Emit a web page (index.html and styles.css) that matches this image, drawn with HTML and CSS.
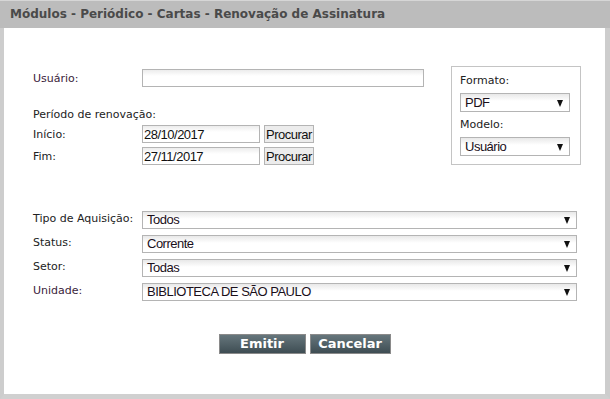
FILE: index.html
```html
<!doctype html>
<html>
<head>
    <title>Renovação de Assinatura</title>
    <meta charset="utf-8"/>
    <link rel="stylesheet" href="styles.css">
</head>
<body>
<div class="window">
    <div class="titlebar">Módulos - Periódico - Cartas - Renovação de Assinatura</div>

    <form class="content">
        <div class="top">
            <div class="fields">
                <div class="row">
                    <label class="req">Usuário:</label>
                    <input type="text" class="text user"/>
                </div>
                <div class="period">Período de renovação:</div>
                <div class="row">
                    <label>Início:</label>
                    <input type="text" class="text date" value="28/10/2017"/>
                    <button type="button" class="find">Procurar</button>
                </div>
                <div class="row gap">
                    <label>Fim:</label>
                    <input type="text" class="text date" value="27/11/2017"/>
                    <button type="button" class="find">Procurar</button>
                </div>
            </div>

            <div class="output">
                <label>Formato:</label>
                <div class="select small">PDF<span class="arrow"></span></div>
                <label class="second">Modelo:</label>
                <div class="select small">Usuário<span class="arrow"></span></div>
            </div>
        </div>

        <div class="filters">
            <div class="row">
                <label>Tipo de Aquisição:</label>
                <div class="select wide">Todos<span class="arrow"></span></div>
            </div>
            <div class="row">
                <label>Status:</label>
                <div class="select wide">Corrente<span class="arrow"></span></div>
            </div>
            <div class="row">
                <label>Setor:</label>
                <div class="select wide">Todas<span class="arrow"></span></div>
            </div>
            <div class="row">
                <label class="req">Unidade:</label>
                <div class="select wide">BIBLIOTECA DE SÃO PAULO<span class="arrow"></span></div>
            </div>
        </div>

        <div class="actions">
            <button type="submit" class="action">Emitir</button>
            <button type="button" class="action">Cancelar</button>
        </div>
    </form>
</div>
</body>
</html>
```

FILE: styles.css
```css
body {
margin: 0;
padding: 0;
background-color: #d2d2d2;
font-family: "DejaVu Sans", Verdana, sans-serif;
font-size: 11px;
color: #222;
}
.window {
box-sizing: border-box;
width: 610px;
height: 399px;
background-color: #fff;
border-left: 4px solid #cdcdcd;
border-right: 5px solid #cdcdcd;
border-bottom: 5px solid #d0d0d0;
}
.titlebar {
box-sizing: border-box;
height: 28px;
line-height: 27px;
margin-left: -4px;
margin-right: -5px;
padding-left: 10px;
background-color: #bcbcbc;
border-top: 1px solid #d6d6d6;
color: #4a4a4a;
font-weight: bold;
font-size: 12px;
}
.content {
margin: 0;
padding: 38px 0 0 29px;
}
.top {
display: flex;
align-items: flex-start;
}
.fields {
width: 391px;
padding-top: 3px;
}
.row {
display: flex;
align-items: center;
height: 18px;
}
.row label {
width: 109px;
flex: none;
}
.req {
color: #3a1d3a;
}
.row.gap {
margin-top: 4px;
}
.period {
margin-top: 21px;
margin-bottom: 3px;
line-height: 14px;
}
.text {
box-sizing: border-box;
height: 18px;
margin: 0;
padding: 0 1px;
border: 1px solid #b4b4b4;
background: linear-gradient(#ececec, #fff 6px);
font-family: "Liberation Sans", Arial, sans-serif;
font-size: 13px;
letter-spacing: -0.5px;
color: #111;
}
.user {
width: 282px;
}
.date {
width: 118px;
}
.find {
box-sizing: border-box;
height: 18px;
width: 50px;
margin: 0 0 0 4px;
padding: 0;
border: 1px solid #b4b4b4;
background-color: #ececec;
font-family: "Liberation Sans", Arial, sans-serif;
font-size: 13px;
letter-spacing: -0.5px;
color: #111;
}
.output {
box-sizing: border-box;
width: 130px;
height: 99px;
margin-left: 27px;
padding: 7px 0 0 8px;
border: 1px solid #c4c4c4;
}
.output label {
display: block;
line-height: 14px;
margin-bottom: 5px;
}
.output .second {
margin-top: 6px;
}
.select {
box-sizing: border-box;
position: relative;
height: 18px;
line-height: 16px;
padding-left: 4px;
border: 1px solid #b4b4b4;
background: linear-gradient(#e8e8e8, #fff 7px);
font-family: "Liberation Sans", Arial, sans-serif;
font-size: 13px;
letter-spacing: -0.5px;
color: #1a0f1a;
}
.small {
width: 110px;
height: 19px;
line-height: 17px;
}
.wide {
width: 435px;
}
.arrow {
position: absolute;
right: 6px;
top: 50%;
margin-top: -3px;
border-left: 3.5px solid transparent;
border-right: 3.5px solid transparent;
border-top: 7px solid #111;
}
.filters {
margin-top: 46px;
}
.filters .row {
margin-bottom: 6px;
align-items: flex-start;
}
.filters .row label {
line-height: 14px;
padding-top: 1px;
}
.actions {
display: flex;
justify-content: center;
gap: 4px;
margin-top: 33px;
margin-left: -29px;
}
.action {
box-sizing: border-box;
height: 20px;
padding: 0;
border: 1px solid #8a8a8a;
background: linear-gradient(#66767c, #3e4d53);
color: #fff;
font-family: "DejaVu Sans", Verdana, sans-serif;
font-weight: bold;
font-size: 13px;
line-height: 18px;
}
.action:first-child {
width: 87px;
}
.action:last-child {
width: 81px;
}
```
